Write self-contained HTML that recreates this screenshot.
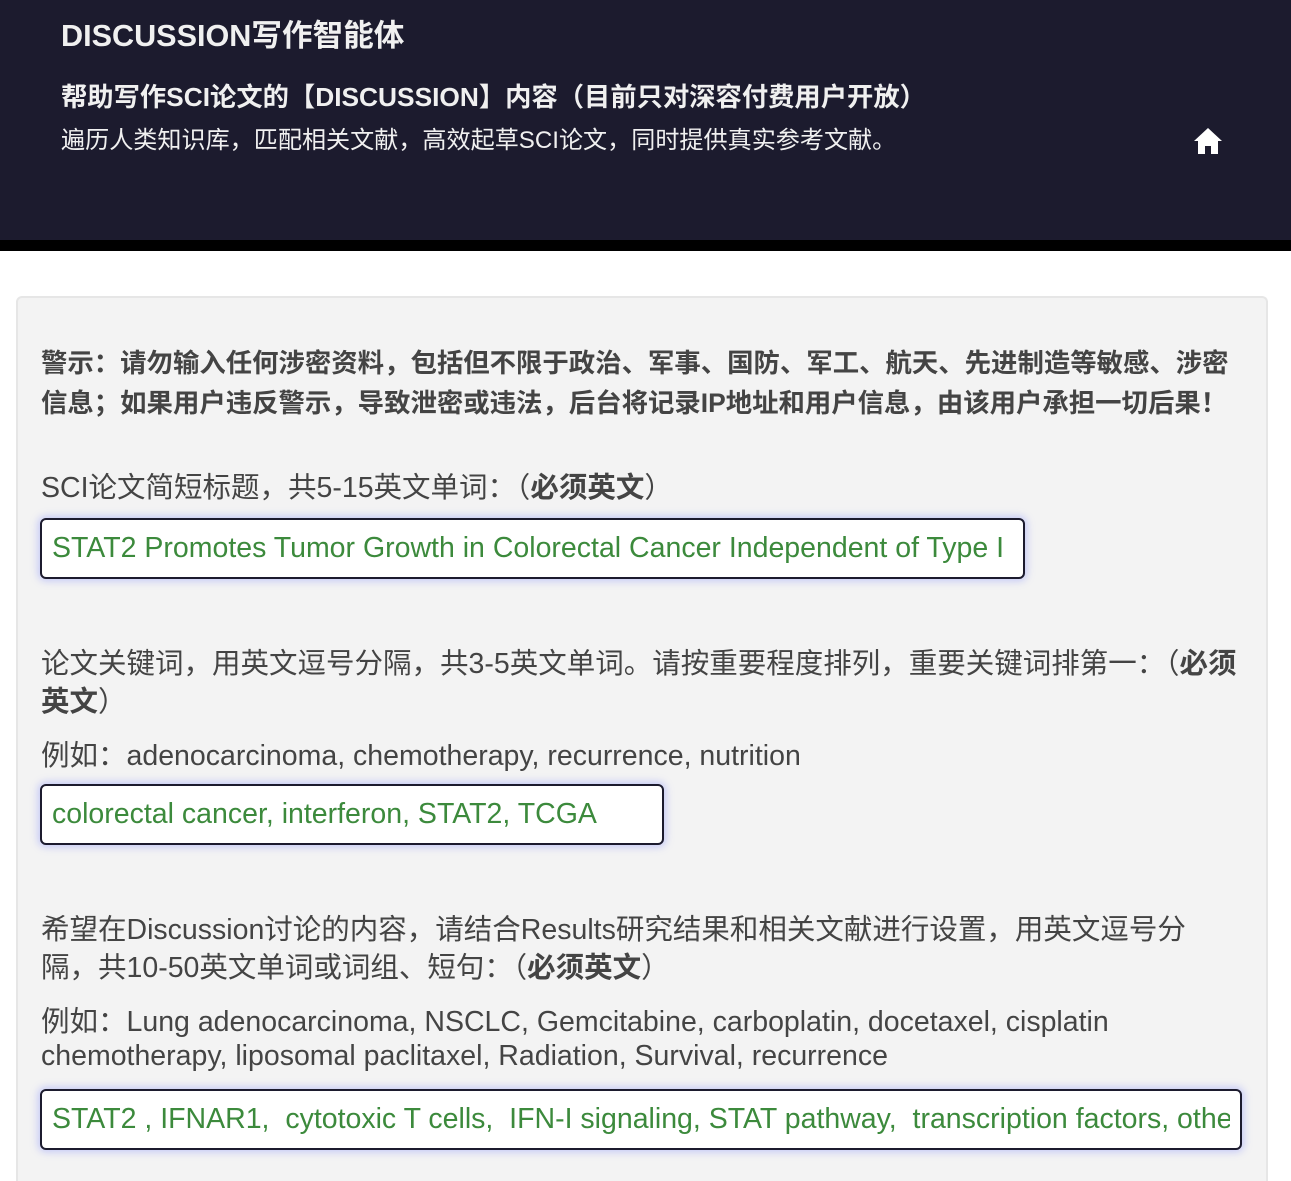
<!DOCTYPE html>
<html><head><meta charset="utf-8"><style>
*{margin:0;padding:0;box-sizing:border-box}
html,body{width:1291px;height:1181px;overflow:hidden}
body{background:#fff;font-family:"Liberation Sans","Noto Sans CJK SC",sans-serif;position:relative}
.hdr{position:absolute;left:0;top:0;width:1291px;height:240px;background:#1c1b2e;color:#f0f0f0}
.band{position:absolute;left:0;top:240px;width:1291px;height:11px;background:#000}
.t{position:absolute;white-space:nowrap}
.panel{position:absolute;left:16px;top:296px;width:1252px;height:885px;background:#f3f3f3;border:2px solid #e6e6e6;border-bottom:none;border-radius:6px 6px 0 0}
.p{color:#444;font-size:28.5px}
.b{font-weight:bold}
.in{position:absolute;height:61px;border:2px solid #1c1b2e;border-radius:6px;background:#fff;box-shadow:0 0 8px 2px rgba(110,120,255,.35);color:#3c8a3c;font-size:28.5px;line-height:57px;padding:0 10px;white-space:nowrap}
.in div{overflow:hidden;width:100%}
</style></head><body>
<div class="hdr">
<div class="t b" style="left:61px;top:11px;font-size:30.6px">DISCUSSION写作智能体</div>
<div class="t b" style="left:61px;top:75px;font-size:26.3px">帮助写作SCI论文的【DISCUSSION】内容（目前只对深容付费用户开放）</div>
<div class="t" style="left:61px;top:120px;font-size:24.1px">遍历人类知识库，匹配相关文献，高效起草SCI论文，同时提供真实参考文献。</div>
<svg style="position:absolute;left:1193px;top:126px" width="30" height="30" viewBox="0 0 30 30"><path d="M15 2 L29 15 L25 15 L25 28 L18 28 L18 20 L12 20 L12 28 L5 28 L5 15 L1 15 Z" fill="#fff"/></svg>
</div>
<div class="band"></div>
<div class="panel"></div>
<div class="t p b" style="left:41px;top:341px;font-size:26.4px">警示：请勿输入任何涉密资料，包括但不限于政治、军事、国防、军工、航天、先进制造等敏感、涉密</div>
<div class="t p b" style="left:41px;top:381px;font-size:26.4px">信息；如果用户违反警示，导致泄密或违法，后台将记录IP地址和用户信息，由该用户承担一切后果！</div>
<div class="t p" style="left:41px;top:465px">SCI论文简短标题，共5-15英文单词：（<b>必须英文</b>）</div>
<div class="in" style="left:40px;top:518px;width:985px"><div>STAT2 Promotes Tumor Growth in Colorectal Cancer Independent of Type I</div></div>
<div class="t p" style="left:41px;top:641px">论文关键词，用英文逗号分隔，共3-5英文单词。请按重要程度排列，重要关键词排第一：（<b>必须</b></div>
<div class="t p" style="left:41px;top:679px"><b>英文</b>）</div>
<div class="t p" style="left:41px;top:733px">例如：adenocarcinoma, chemotherapy, recurrence, nutrition</div>
<div class="in" style="left:40px;top:784px;width:624px"><div>colorectal cancer, interferon, STAT2, TCGA</div></div>
<div class="t p" style="left:41px;top:907px">希望在Discussion讨论的内容，请结合Results研究结果和相关文献进行设置，用英文逗号分</div>
<div class="t p" style="left:41px;top:945px">隔，共10-50英文单词或词组、短句：（<b>必须英文</b>）</div>
<div class="t p" style="left:41px;top:999px">例如：Lung adenocarcinoma, NSCLC, Gemcitabine, carboplatin, docetaxel, cisplatin</div>
<div class="t p" style="left:41px;top:1040px">chemotherapy, liposomal paclitaxel, Radiation, Survival, recurrence</div>
<div class="in" style="left:40px;top:1089px;width:1202px"><div>STAT2 , IFNAR1,&nbsp; cytotoxic T cells,&nbsp; IFN-I signaling, STAT pathway,&nbsp; transcription factors, others</div></div>
</body></html>
